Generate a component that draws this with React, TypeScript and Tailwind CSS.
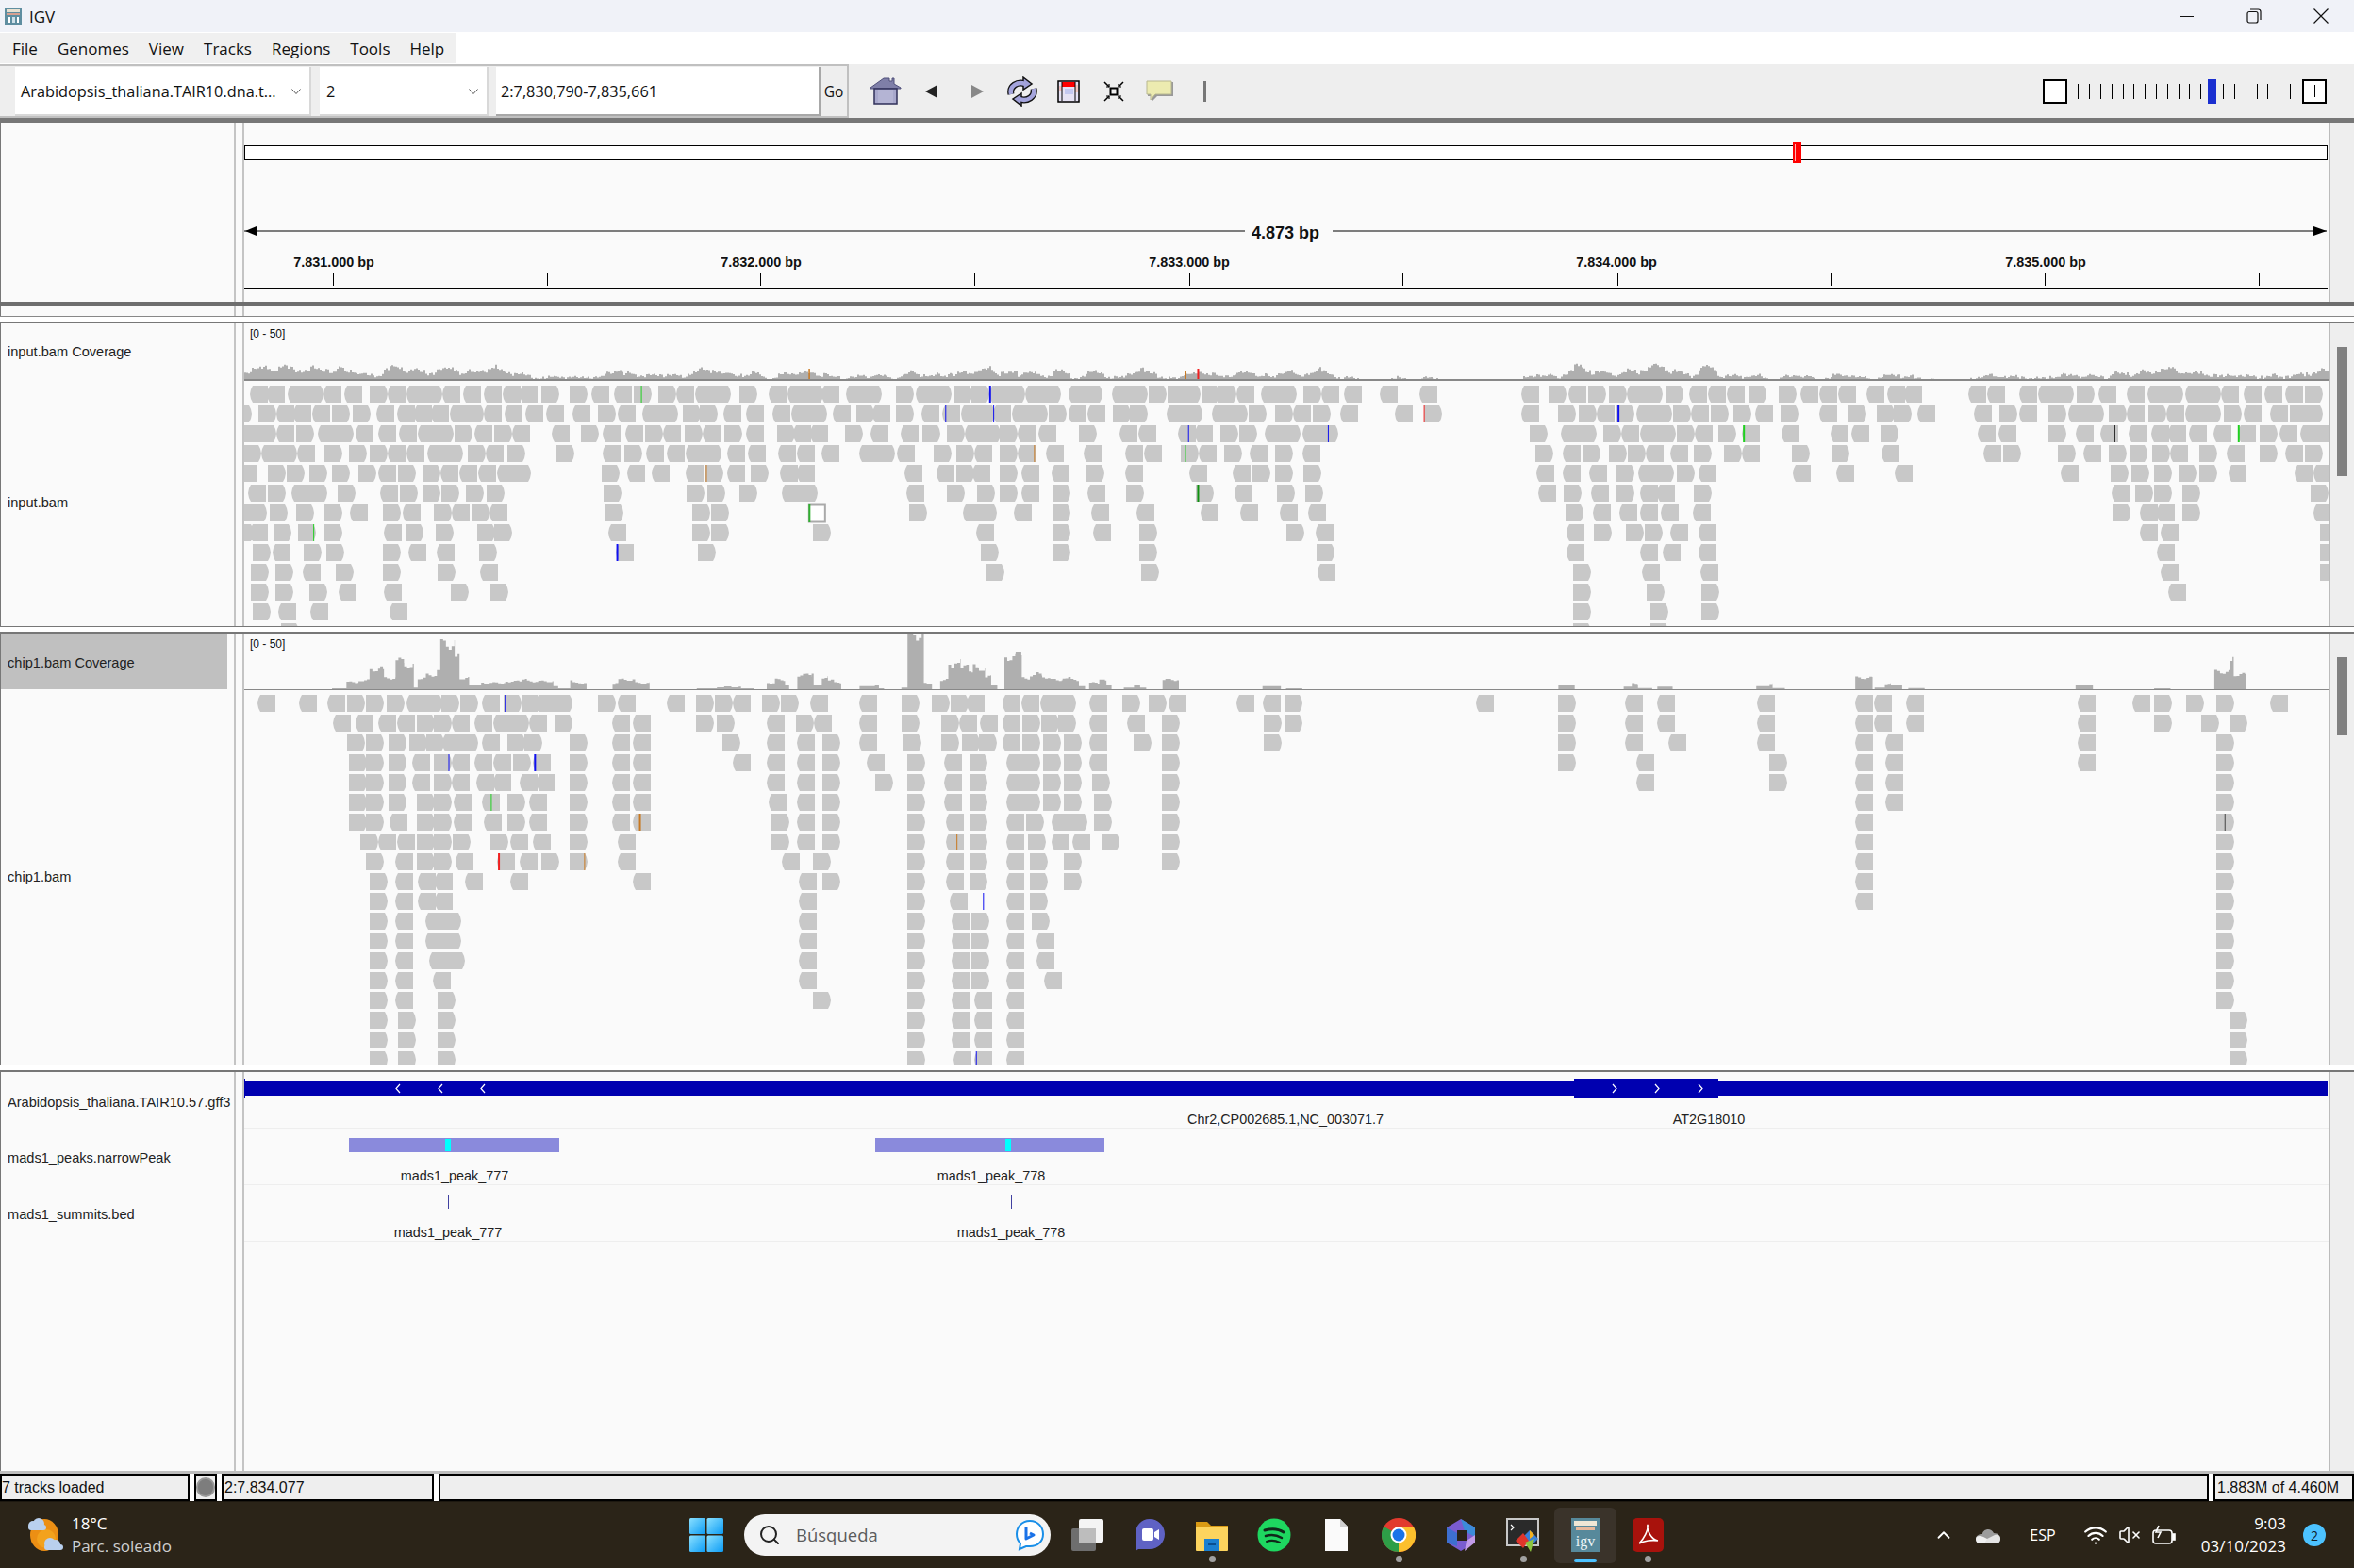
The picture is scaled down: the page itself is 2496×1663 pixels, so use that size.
import React from 'react';
import { VolumeX, Wifi, ChevronUp, Search } from 'lucide-react';

// read positions were sampled from two crops: left part (x < 800) and right part (x >= 800)
const leftX = (z: number) => z / 1.96;
const rightX = (z: number) => 800 + z * 1.0817;

type Row = [number[], number[]];
type Mark = [number, number, string, number?];

const BLUE = '#1010f0';
const GREEN = '#20d020';
const RED = '#f02020';
const ORANGE = '#c87820';

const inputRows: Row[] = [
  [[520,555,598,635,672,715,768,806,844,882,920,963,1006,1045,1080,1125,1184,1228,1275,1318,1369,1406,1445,1482,1537],
   [14,32,50,66,90,107,139,158,176,196,213,230,248,265,283,308,324,350,368,386,405,420,438,455,472,496,514,538,556,578,613,652,752,778,798,817,838,855,873,893,916,935,953,974,1004,1025,1044,1062,1090,1110,1127,1190,1208,1240,1258,1276,1296,1317,1345,1365,1383,1402,1420,1438,1460,1480,1500,1520]],
  [[486,537,575,610,648,690,733,783,825,860,895,935,968,1005,1048,1092,1135,1190,1243,1283,1335,1372,1420,1455,1503,1550],
   [18,36,54,77,100,116,139,164,184,202,218,234,252,270,288,308,326,351,368,404,422,448,466,484,510,528,547,574,628,656,752,788,808,826,845,864,882,900,918,937,960,981,1006,1044,1072,1100,1117,1140,1195,1220,1240,1268,1288,1305,1328,1345,1366,1384,1402,1420,1440,1460,1486,1505,1520]],
  [[500,537,575,615,660,698,738,786,830,868,905,945,986,1027,1065,1146,1207,1253,1300,1340,1378,1422,1460,1505,1550],
   [22,38,55,89,114,143,165,189,206,224,240,258,278,318,358,376,415,432,457,475,500,518,537,555,760,790,808,832,850,868,886,904,922,945,968,1007,1055,1075,1104,1199,1219,1268,1295,1319,1347,1369,1386,1406,1430,1454,1475,1495,1515,1530]],
  [[505,543,580,618,675,725,768,806,845,888,925,972,1010,1055,1156,1253,1298,1342,1385,1425,1463,1512,1555],
   [23,42,66,103,120,140,176,198,215,240,258,286,323,363,382,418,435,460,485,510,537,765,792,812,838,856,874,898,921,950,968,1017,1056,1105,1205,1224,1278,1303,1328,1348,1370,1388,1416,1443,1475,1500,1520]],
  [[495,557,595,643,690,745,785,828,878,915,955,993,1033,1067,1250,1303,1355,1425,1467,1512,1560],
   [25,42,147,178,198,214,240,262,291,325,363,426,469,488,510,538,766,792,818,845,866,884,904,925,1018,1060,1118,1280,1329,1350,1372,1396,1416,1445,1510,1528]],
  [[515,557,605,643,702,790,832,878,917,968,1012,1255,1427,1470,1537],
   [27,44,149,189,218,240,262,292,326,364,433,471,512,540,768,793,820,845,868,885,921,1330,1353,1372,1400,1525]],
  [[490,517,560,615,675,727,796,836,902,938,980,1018,1258,1438,1477],
   [152,204,220,254,292,330,374,437,476,515,543,795,822,848,868,888,920,1331,1358,1375,1400,1528]],
  [[490,520,568,620,675,798,843,905,992,1028,1265,1438,1478],
   [57,217,292,332,377,521,550,796,823,854,873,898,925,1358,1378,1535]],
  [[525,566,632,678,796,848,907,995,1280,1450], [222,292,377,551,796,868,890,925,1375,1535]],
  [[522,572,630,698,796,910,998], [227,379,552,802,870,927,1378,1535]],
  [[522,573,643,703,798,937,1020], [802,875,928,1386]],
  [[525,578,645,810], [802,878,928]],
  [[585], [802,878]],
];

const chipRows: Row[] = [
  [[535,621,680,721,760,804,845,882,918,957,1002,1047,1085,1115,1152,1243,1284,1385,1447,1485,1522],
   [7,26,55,103,144,174,192,208,243,262,280,298,328,361,386,406,472,498,520,707,788,853,885,983,1079,1097,1129,1297,1351,1372,1403,1433,1486]],
  [[692,738,786,825,866,902,938,985,1025,1063,1100,1152,1273,1315,1447,1490],
   [12,41,58,103,144,183,201,221,243,263,281,298,328,365,399,499,520,788,853,885,983,1079,1097,1129,1297,1372,1418,1446]],
  [[721,760,808,850,885,920,957,1002,1055,1090,1184,1273,1315,1502],
   [12,42,67,103,146,183,203,220,243,263,283,303,328,372,399,499,788,853,896,983,1079,1108,1297,1433]],
  [[725,760,808,856,902,938,985,1025,1067,1107,1184,1273,1315,1522],
   [12,42,67,110,150,186,211,247,263,283,303,328,399,788,864,995,1079,1108,1297,1433]],
  [[725,760,808,856,902,938,990,1025,1079,1115,1184,1273,1315],
   [12,42,67,118,150,186,211,247,263,283,303,331,399,864,995,1079,1108,1433]],
  [[725,760,808,866,902,943,1002,1055,1100,1184,1273,1315],
   [14,42,67,150,186,211,247,263,283,303,333,399,1079,1108,1433]],
  [[725,760,810,866,902,943,1005,1055,1100,1184,1273,1315],
   [17,42,67,150,188,211,247,266,291,309,333,399,1079,1433]],
  [[749,786,825,866,902,940,1019,1060,1108,1184,1284],
   [17,42,67,150,188,211,247,268,291,312,340,399,1079,1433]],
  [[760,821,866,902,947,1033,1079,1125,1184,1284], [27,57,150,188,211,247,270,303,399,1079,1433]],
  [[768,821,868,903,966,1060,1315], [43,67,150,188,211,247,270,303,1079,1433]],
  [[768,821,868,903], [43,150,191,247,270,1079,1433]],
  [[768,821,884,921], [43,150,193,213,247,272,1433]],
  [[768,821,884,921], [43,150,193,213,247,276,1433]],
  [[768,821,892,929], [43,150,193,213,247,276,1433]],
  [[768,821,900], [43,150,193,213,247,284,1433]],
  [[768,821,909], [57,150,193,215,247,1433]],
  [[768,827,909], [150,193,215,247,1446]],
  [[768,827,909], [150,193,215,247,1446]],
  [[768,827,909], [150,195,215,247,1446]],
];

const inputMarks: Mark[] = [
  [0, leftX(1332), GREEN], [4, leftX(1467), ORANGE], [7, leftX(651), GREEN], [8, leftX(1281), BLUE, 2],
  [0, rightX(230), BLUE, 2], [1, rightX(187), BLUE], [1, rightX(234), BLUE], [1, rightX(656), RED], [1, rightX(846), BLUE, 2],
  [2, rightX(425), BLUE], [2, rightX(562), BLUE], [2, rightX(969), GREEN, 2], [2, rightX(1333), '#222222'], [2, rightX(1454), GREEN, 2],
  [3, rightX(274), ORANGE], [3, rightX(422), GREEN], [5, rightX(434), '#109010', 2],
];

const chipMarks: Mark[] = [
  [0, leftX(1049), BLUE], [3, leftX(932), BLUE], [3, leftX(1110), BLUE, 2], [5, leftX(1020), GREEN],
  [6, leftX(1328), ORANGE, 2], [8, leftX(1035), RED, 2], [8, leftX(1214), ORANGE],
  [7, rightX(198), ORANGE], [10, rightX(224), BLUE], [18, rightX(217), BLUE], [6, rightX(1441), '#444444'],
];

// [start, end, height] in crop units, height in 3x px
const chipCoverageLeft = [
  [690,720,3],[720,745,22],[745,768,28],[768,790,63],[790,798,70],[798,822,35],[822,840,90],[840,860,75],[860,868,5],[868,885,35],[885,908,45],[908,915,55],[915,945,143],[945,955,100],[955,975,35],[975,1000,15],[1000,1050,20],[1050,1085,25],[1085,1095,35],[1095,1150,25],[1150,1160,10],[1160,1185,3],[1185,1190,30],[1190,1219,20],[1273,1285,20],[1285,1316,30],[1316,1320,35],[1320,1350,20],[1448,1490,3],[1490,1505,6],[1505,1520,9],[1520,1535,6],[1535,1540,8],[1540,1568,3],
];
const chipCoverageRight = [
  [12,20,20],[20,30,30],[30,34,12],[42,56,45],[56,58,55],[58,66,12],[66,72,38],[72,78,28],[78,85,20],[103,118,10],[118,122,15],[122,127,3],[144,150,5],[150,166,175],[166,174,20],[182,190,30],[190,196,75],[196,202,92],[202,210,70],[210,214,60],[214,220,75],[220,226,65],[226,232,40],[232,238,12],[245,250,92],[250,256,100],[256,262,108],[262,270,35],[270,276,40],[276,282,48],[282,290,38],[290,302,30],[302,310,38],[310,318,30],[318,324,10],[328,338,20],[338,345,28],[345,350,12],[362,372,5],[372,378,12],[378,384,5],[400,416,30],[498,516,10],[521,537,3],[788,804,13],[852,860,8],[860,866,18],[866,880,4],[885,900,8],[982,995,10],[995,998,18],[998,1010,4],[1079,1096,36],[1098,1108,5],[1108,1114,18],[1114,1125,12],[1131,1147,4],[1295,1312,13],[1372,1388,3],[1431,1446,55],[1446,1450,100],[1450,1462,46],
];

const READ_W = 19;
const READ_H = 18;
const NOTCH = 3;

const rowStarts = (row: Row) => [...row[0].map(leftX), ...row[1].map(rightX)];

function readsPath(rows: Row[], top: number) {
  let d = '';
  rows.forEach((row, i) => {
    const y = top + i * 21;
    rowStarts(row).forEach((x) => {
      const px = Math.round(x);
      const end = px + READ_W;
      const mid = y + READ_H / 2;
      const bottom = y + READ_H;
      if (px % 2 === 0) {
        d += `M${px} ${y}H${end - NOTCH}L${end - 1} ${y + 4}L${end} ${mid}L${end - 1} ${bottom - 4}L${end - NOTCH} ${bottom}H${px}Z`;
      } else {
        d += `M${px + NOTCH} ${y}H${end}V${bottom}H${px + NOTCH}L${px + 1} ${bottom - 4}L${px} ${mid}L${px + 1} ${y + 4}Z`;
      }
    });
  });
  return d;
}

function inputCoveragePath(base: number) {
  const all = inputRows.flatMap(rowStarts);
  let d = `M259 ${base}`;
  for (let x = 259; x < 2468; x += 2) {
    const count = all.filter((s) => s <= x && x < s + READ_W).length;
    const noise = Math.sin(x * 0.9) * 0.9 + Math.sin(x * 0.23) * 1.1;
    const h = count === 0 ? 0 : Math.max(1, count * 1.2 + noise);
    d += `V${base - h}H${x + 2}`;
  }
  return d + `V${base}Z`;
}

// splits a coverage step into narrow columns so the profile looks jagged like the real track
function chipCoveragePath(steps: number[][], toX: (z: number) => number, base: number) {
  let d = '';
  steps.forEach(([a, b, h]) => {
    const x0 = toX(a);
    const x1 = toX(b);
    for (let x = x0; x < x1; x += 3) {
      const w = Math.min(3, x1 - x);
      const t = h > 15 ? h / 3 + Math.sin(x * 1.7) * (h / 3) * 0.12 : h / 3;
      d += `M${x} ${base}V${base - t}H${x + w}V${base}Z`;
    }
  });
  return d;
}

const Reads = ({ rows, top, marks }: { rows: Row[]; top: number; marks: Mark[] }) => (
  <>
    <path d={readsPath(rows, top)} fill="#c8c8c8" />
    {marks.map(([row, x, color, w], i) => (
      <rect key={i} x={x} y={top + row * 21} width={w ?? 1} height={READ_H} fill={color} />
    ))}
  </>
);

const TitleBar = () => (
  <div className="h-[34px] flex items-center bg-[#f0f2f8] shrink-0">
    <svg width="18" height="18" viewBox="0 0 18 18" className="ml-[5px]">
      <rect width="18" height="18" fill="#5f8ea0" />
      <rect x="2" y="2" width="14" height="3" fill="#e8e0d0" />
      <rect x="2" y="6" width="14" height="2" fill="#d8a090" />
      <rect x="3" y="10" width="3" height="6" fill="#ffffff" />
      <rect x="8" y="10" width="3" height="6" fill="#d0e0e8" />
      <rect x="13" y="10" width="2" height="6" fill="#ffffff" />
    </svg>
    <span className="ml-[8px] pt-[1px] text-[17px] text-[#111] font-['Open_Sans',sans-serif]">IGV</span>
    <div className="ml-auto flex h-full">
      <div className="w-[71px] flex items-center justify-center">
        <div className="w-[15px] h-[1px] bg-[#111]" />
      </div>
      <div className="w-[71px] flex items-center justify-center">
        <svg width="16" height="16" viewBox="0 0 16 16" fill="none" stroke="#111" strokeWidth="1.2">
          <rect x="1" y="3.5" width="11" height="11.5" rx="2" />
          <path d="M4 1h8.5A2.5 2.5 0 0 1 15 3.5V12" />
        </svg>
      </div>
      <div className="w-[71px] flex items-center justify-center">
        <svg width="16" height="16" viewBox="0 0 16 16" stroke="#111" strokeWidth="1.2">
          <path d="M0.5 0.5L15.5 15.5M15.5 0.5L0.5 15.5" />
        </svg>
      </div>
    </div>
  </div>
);

const MenuBar = () => (
  <div className="h-[34px] bg-white shrink-0">
    <div className="w-[484px] h-[32px] mt-[1px] pt-[2px] bg-[#f0f0f0] flex items-center pl-[13px] gap-[21px] text-[17px] text-[#111] font-['Open_Sans',sans-serif]">
      {['File', 'Genomes', 'View', 'Tracks', 'Regions', 'Tools', 'Help'].map((m) => (
        <span key={m}>{m}</span>
      ))}
    </div>
  </div>
);

const Chevron = () => (
  <svg width="10" height="6" viewBox="0 0 10 6" fill="none" stroke="#555" strokeWidth="1">
    <path d="M0.5 0.5L5 5.5L9.5 0.5" />
  </svg>
);

const HomeIcon = () => (
  <svg width="34" height="30" viewBox="0 0 34 30">
    <path d="M1 11L15 1H21V4H24V1H26V7L33 11V12H1Z" fill="#7f7fa8" stroke="#50507a" strokeWidth="1" />
    <rect x="5" y="12" width="24" height="16" fill="#a8a8cc" stroke="#30305a" strokeWidth="1.5" />
    <rect x="9" y="13" width="16" height="14" fill="#b4b4d4" />
  </svg>
);

const RefreshIcon = () => (
  <svg width="34" height="32" viewBox="0 0 34 32" fill="none">
    <g stroke="#111" strokeWidth="7">
      <path d="M5 19C3 10 12 5 20 8" />
      <path d="M29 13C31 22 22 27 14 24" />
    </g>
    <path d="M18 1L27 8L18 14Z" fill="#a0a0d8" stroke="#111" strokeWidth="1.5" />
    <path d="M16 18L7 24L16 31Z" fill="#a0a0d8" stroke="#111" strokeWidth="1.5" />
    <g stroke="#a4a4dc" strokeWidth="4.5">
      <path d="M5 19C3 10 12 5 20 8" />
      <path d="M29 13C31 22 22 27 14 24" />
    </g>
  </svg>
);

const RegionIcon = () => (
  <svg width="24" height="24" viewBox="0 0 24 24">
    <rect x="1" y="1" width="22" height="22" fill="#e6e2f4" stroke="#000" strokeWidth="1.5" />
    <rect x="5" y="2" width="14" height="5" fill="#ff0000" />
    <rect x="8" y="9" width="9" height="6" fill="#c4c8f0" />
    <rect x="2" y="6" width="3" height="5" fill="#f0c0c0" />
    <rect x="19" y="5" width="3" height="8" fill="#f0c8c0" />
    <path d="M5 2V22M19 2V22" stroke="#000" strokeWidth="1" />
  </svg>
);

const FitIcon = () => (
  <svg width="22" height="22" viewBox="0 0 22 22" fill="none" stroke="#000">
    <rect x="7.5" y="7.5" width="7" height="7" strokeWidth="2" />
    <path d="M1 1L6 6M21 1L16 6M1 21L6 16M21 21L16 16" strokeWidth="1.5" />
    <path d="M3 6H6V3M19 6H16V3M3 16H6V19M19 16H16V19" strokeWidth="1.2" />
  </svg>
);

const CommentIcon = () => (
  <svg width="30" height="24" viewBox="0 0 30 24">
    <path d="M2 2H29V17H12L6 23V17H2Z" fill="#999" />
    <path d="M1 1H27V15H10L5 21V15H1Z" fill="#ecebb0" stroke="#b8b890" strokeWidth="1" />
  </svg>
);

const Toolbar = () => (
  <div className="h-[57px] bg-[#eeeeee] flex shrink-0 text-[16.3px] text-[#111] font-['Open_Sans',sans-serif]">
    <div className="w-[900px] border-y-2 border-r-2 border-[#c0c0c0] flex items-stretch pl-[16px] pt-[1px]">
      <div className="w-[314px] bg-white border-r-2 border-b-2 border-[#d8d8d8] flex items-center justify-between pl-[6px] pr-[9px] pt-[2px]">
        <span>Arabidopsis_thaliana.TAIR10.dna.t...</span>
        <Chevron />
      </div>
      <div className="w-[179px] ml-[9px] bg-white border-r-2 border-b-2 border-[#d8d8d8] flex items-center justify-between pl-[7px] pr-[9px] pt-[2px]">
        <span>2</span>
        <Chevron />
      </div>
      <div className="w-[344px] ml-[8px] bg-white border-r-2 border-b-2 border-[#a8a8a8] flex items-center pl-[5px] pt-[2px]">
        2:7,830,790-7,835,661
      </div>
      <div className="flex-1 flex items-center justify-center pt-[2px] text-[15.5px]">Go</div>
    </div>
    <div className="ml-[15px] pt-[1px] flex items-center">
      <div className="w-[48.4px] flex justify-center"><HomeIcon /></div>
      <div className="w-[48.4px] flex justify-center">
        <svg width="14" height="14" viewBox="0 0 14 14"><path d="M0 7L13 0V14Z" fill="#222" /></svg>
      </div>
      <div className="w-[48.4px] flex justify-center">
        <svg width="14" height="14" viewBox="0 0 14 14"><path d="M14 7L1 0V14Z" fill="#888" /></svg>
      </div>
      <div className="w-[48.4px] flex justify-center"><RefreshIcon /></div>
      <div className="w-[48.4px] flex justify-center"><RegionIcon /></div>
      <div className="w-[48.4px] flex justify-center"><FitIcon /></div>
      <div className="w-[48.4px] flex justify-center"><CommentIcon /></div>
      <div className="w-[48.4px] flex justify-center"><div className="w-[3px] h-[22px] bg-[#777]" /></div>
    </div>
    <div className="ml-auto mr-[29px] flex items-center">
      <div className="w-[26px] h-[26px] border-2 border-black bg-white flex items-center justify-center text-black">
        <div className="w-[14px] h-[1px] bg-black" />
      </div>
      <div className="ml-[11px] flex items-center gap-[10.8px]">
        {Array.from({ length: 12 }).map((_, i) => (
          <div key={i} className="w-px h-[16px] bg-black" />
        ))}
      </div>
      <div className="ml-[7px] w-[9px] h-[26px] bg-[#1a2fd0]" />
      <div className="ml-[7px] flex items-center gap-[10.8px]">
        {Array.from({ length: 7 }).map((_, i) => (
          <div key={i} className="w-px h-[16px] bg-black" />
        ))}
      </div>
      <div className="ml-[12px] w-[26px] h-[26px] border-2 border-black bg-white relative flex items-center justify-center">
        <div className="w-[13px] h-[1px] bg-black" />
        <div className="absolute w-[1px] h-[13px] bg-black" />
      </div>
    </div>
  </div>
);

const NameColumn = ({ children }: { children?: React.ReactNode }) => (
  <div className="w-[259px] shrink-0 flex h-full border-l border-[#777] bg-[#fafafa]">
    <div className="w-[249px] flex flex-col border-r-2 border-[#c4c4c4]">{children}</div>
    <div className="w-[9px] border-r-2 border-[#c4c4c4]" />
  </div>
);

const Scroll = ({ thumbTop, thumbH }: { thumbTop?: string; thumbH?: string }) => (
  <div className="flex-1 bg-[#eeeeee] border-l-2 border-[#bbbbbb] flex flex-col items-center">
    {thumbTop && <div className={thumbTop} />}
    {thumbH && <div className={thumbH} />}
  </div>
);

const TrackName = ({ label, className }: { label: string; className?: string }) => (
  <div className={`flex items-center pl-[7px] text-[14.6px] leading-none text-[#222] whitespace-nowrap ${className ?? ''}`}>
    {label}
  </div>
);

const RulerPanel = () => {
  const ticks = [353, 580, 806, 1033, 1261, 1487, 1715, 1941, 2168, 2395];
  const labels: [number, string][] = [
    [354, '7.831.000 bp'],
    [807, '7.832.000 bp'],
    [1261, '7.833.000 bp'],
    [1714, '7.834.000 bp'],
    [2169, '7.835.000 bp'],
  ];
  return (
    <div className="h-[190px] flex shrink-0">
      <NameColumn />
      <svg width="2210" height="190" viewBox="259 130 2210 190" className="bg-[#fafafa] shrink-0">
        <rect x="259.5" y="154.5" width="2208" height="15" fill="#fff" stroke="#000" />
        <rect x="1901.5" y="151.5" width="8" height="21" fill="#f00" stroke="#f00" />
        <rect x="1903" y="153" width="1" height="18" fill="#ffb0b0" />
        <path d="M259 245H2467" stroke="#000" strokeWidth="1" />
        <path d="M260 245L272 240V250Z" fill="#000" />
        <path d="M2467 245L2453 240V250Z" fill="#000" />
        <rect x="1320" y="235" width="93" height="20" fill="#fafafa" />
        <text x="1363" y="253" textAnchor="middle" fontSize="18" fontWeight="700" fill="#111">4.873 bp</text>
        {labels.map(([x, t]) => (
          <text key={t} x={x} y="283" textAnchor="middle" fontSize="14.4" fontWeight="700" fill="#111">{t}</text>
        ))}
        {ticks.map((x) => (
          <rect key={x} x={x} y="290" width="1" height="13" fill="#000" />
        ))}
        <rect x="259" y="305" width="2209" height="1" fill="#000" />
      </svg>
      <Scroll />
    </div>
  );
};

const InputPanel = () => (
  <div className="h-[321px] flex shrink-0">
    <NameColumn>
      <TrackName label="input.bam Coverage" className="h-[60px]" />
      <TrackName label="input.bam" className="flex-1" />
    </NameColumn>
    <svg width="2210" height="321" viewBox="259 343 2210 321" className="bg-[#fafafa] shrink-0">
      <text x="265" y="358" fontSize="12" fill="#111">[0 - 50]</text>
      <path d={inputCoveragePath(403)} fill="#afafaf" />
      <rect x={rightX(53)} y="391" width="1.5" height="12" fill={ORANGE} />
      <rect x={rightX(422)} y="393" width="1.5" height="10" fill={ORANGE} />
      <rect x={rightX(434)} y="391" width="2" height="12" fill={RED} />
      <rect x="259" y="402" width="2210" height="2" fill="#888" />
      <Reads rows={inputRows} top={409} marks={inputMarks} />
      <rect x={rightX(53) + 0.5} y="535.5" width="17" height="18" fill="#fff" stroke="#aaa" strokeWidth="2" />
      <rect x={rightX(53)} y="535" width="2" height="19" fill="#30b030" />
    </svg>
    <Scroll thumbTop="h-[25px]" thumbH="w-[11px] h-[137px] bg-[#808080]" />
  </div>
);

const ChipPanel = () => {
  const base = 731;
  return (
    <div className="h-[457px] flex shrink-0">
      <NameColumn>
        <TrackName label="chip1.bam Coverage" className="h-[59px] w-[240px] bg-[#c0c0c0] pt-[3px]" />
        <TrackName label="chip1.bam" className="flex-1" />
      </NameColumn>
      <svg width="2210" height="457" viewBox="259 672 2210 457" className="bg-[#fafafa] shrink-0">
        <text x="265" y="687" fontSize="12" fill="#111">[0 - 50]</text>
        <path d={chipCoveragePath(chipCoverageLeft, leftX, base)} fill="#afafaf" />
        <path d={chipCoveragePath(chipCoverageRight, rightX, base)} fill="#afafaf" />
        <rect x="259" y="731" width="2210" height="1" fill="#888" />
        <Reads rows={chipRows} top={737} marks={chipMarks} />
      </svg>
      <Scroll thumbTop="h-[25px]" thumbH="w-[11px] h-[83px] bg-[#808080]" />
    </div>
  );
};

const ChevronMark = ({ x, right }: { x: number; right?: boolean }) => (
  <path
    d={right ? `M${x - 2} 1150L${x + 2} 1154.5L${x - 2} 1159` : `M${x + 2} 1150L${x - 2} 1154.5L${x + 2} 1159`}
    stroke="#fff"
    strokeWidth="1.2"
    fill="none"
  />
);

const FeaturePanel = () => (
  <div className="h-[423px] flex shrink-0">
    <NameColumn>
      <TrackName label="Arabidopsis_thaliana.TAIR10.57.gff3" className="h-[59px] pt-[5px]" />
      <TrackName label="mads1_peaks.narrowPeak" className="h-[60px] pt-[5px]" />
      <TrackName label="mads1_summits.bed" className="h-[60px] pt-[4px]" />
    </NameColumn>
    <svg width="2210" height="423" viewBox="259 1137 2210 423" className="bg-[#fafafa] shrink-0">
      <rect x="259" y="1144" width="1" height="21" fill="#0000b0" />
      <rect x="259" y="1147" width="2209" height="15" fill="#0000b0" />
      <rect x="1669" y="1144" width="153" height="21" fill="#0000b0" />
      {[422, 467, 512].map((x) => <ChevronMark key={x} x={x} />)}
      {[1712, 1757, 1803].map((x) => <ChevronMark key={x} x={x} right />)}
      <text x="1363" y="1192" textAnchor="middle" fontSize="14.4" fill="#222">Chr2,CP002685.1,NC_003071.7</text>
      <text x="1812" y="1192" textAnchor="middle" fontSize="14.4" fill="#222">AT2G18010</text>
      <rect x="259" y="1196" width="2210" height="1" fill="#eeeeee" />
      <rect x="370" y="1207" width="223" height="15" fill="#8a8adc" />
      <rect x="472" y="1208" width="6" height="13" fill="#00ffff" />
      <rect x="928" y="1207" width="243" height="15" fill="#8a8adc" />
      <rect x="1066" y="1208" width="6" height="13" fill="#00ffff" />
      <text x="482" y="1252" textAnchor="middle" fontSize="14.4" fill="#222">mads1_peak_777</text>
      <text x="1051" y="1252" textAnchor="middle" fontSize="14.4" fill="#222">mads1_peak_778</text>
      <rect x="259" y="1256" width="2210" height="1" fill="#eeeeee" />
      <rect x="475" y="1267" width="1" height="15" fill="#4040a0" />
      <rect x="1072" y="1267" width="1" height="15" fill="#4040a0" />
      <text x="475" y="1312" textAnchor="middle" fontSize="14.4" fill="#222">mads1_peak_777</text>
      <text x="1072" y="1312" textAnchor="middle" fontSize="14.4" fill="#222">mads1_peak_778</text>
      <rect x="259" y="1316" width="2210" height="1" fill="#eeeeee" />
    </svg>
    <Scroll />
  </div>
);

const StatusBar = () => (
  <div className="h-[29px] flex bg-white text-[16px] leading-none text-[#111] shrink-0">
    <div className="w-[201px] border-2 border-black bg-[#eeeeee] flex items-center">7 tracks loaded</div>
    <div className="w-[24px] ml-[5px] border-2 border-black bg-[#eeeeee] flex items-center justify-center">
      <div className="w-[20px] h-[21px] rounded-full bg-[#7d7d7d] border-2 border-[#999]" />
    </div>
    <div className="w-[225px] ml-[5px] border-2 border-black bg-[#eeeeee] flex items-center pl-[1px]">2:7.834.077</div>
    <div className="w-[1877px] ml-[5px] border-2 border-black bg-[#eeeeee]" />
    <div className="flex-1 ml-[5px] border-2 border-black bg-[#eeeeee] flex items-center pl-[2px]">1.883M of 4.460M</div>
  </div>
);

const WeatherIcon = () => (
  <svg width="40" height="40" viewBox="0 0 40 40">
    <ellipse cx="20" cy="20" rx="15" ry="17" fill="#ec8f14" />
    <ellipse cx="22" cy="24" rx="10" ry="10" fill="#f3a21c" />
    <g fill="#b9d0ee">
      <circle cx="8" cy="10" r="5" />
      <circle cx="14" cy="8" r="6" />
      <rect x="3" y="9" width="19" height="6" rx="3" />
      <circle cx="26" cy="29" r="6" />
      <circle cx="32" cy="30" r="5" />
      <rect x="20" y="30" width="20" height="6" rx="3" />
    </g>
  </svg>
);

const WindowsLogo = () => (
  <svg width="36" height="36" viewBox="0 0 36 36">
    <defs>
      <linearGradient id="win" x1="0" y1="0" x2="1" y2="1">
        <stop offset="0" stopColor="#8ae0ff" />
        <stop offset="1" stopColor="#0c9cf5" />
      </linearGradient>
    </defs>
    <rect width="17" height="17" rx="1.5" fill="url(#win)" />
    <rect x="18.5" width="17.5" height="17" rx="1.5" fill="url(#win)" />
    <rect y="18.5" width="17" height="17.5" rx="1.5" fill="url(#win)" />
    <rect x="18.5" y="18.5" width="17.5" height="17.5" rx="1.5" fill="url(#win)" />
  </svg>
);

const BingIcon = () => (
  <svg width="32" height="34" viewBox="0 0 32 34" fill="none">
    <path d="M16 2C25 2 30 9 30 16C30 24 24 29 16 29H12L5 32L6 26C3 23 2 20 2 16C2 9 7 2 16 2Z" stroke="#1a8fe8" strokeWidth="2" fill="#fff" />
    <path d="M12 8V21L20 17L16 15" stroke="#1a72e8" strokeWidth="3" strokeLinejoin="round" />
  </svg>
);

const TaskIcons: React.ReactNode[] = [
  <svg key="view" width="36" height="36" viewBox="0 0 36 36">
    <rect x="1" y="11" width="26" height="24" rx="2" fill="#6e6e6e" />
    <rect x="9" y="1" width="26" height="25" rx="2" fill="#f4f4f4" />
    <rect x="9" y="11" width="18" height="15" fill="#bdbdbd" />
  </svg>,
  <svg key="chat" width="34" height="36" viewBox="0 0 34 36">
    <path d="M17 1C26 1 33 8 33 17C33 26 26 33 17 33H5L2 35V17C2 8 8 1 17 1Z" fill="#5f62c4" />
    <rect x="9" y="11" width="12" height="13" rx="2" fill="#fff" />
    <path d="M22 15L27 12V23L22 20Z" fill="#fff" />
  </svg>,
  <svg key="folder" width="36" height="36" viewBox="0 0 36 36">
    <path d="M1 4H13L17 8H35V34H1Z" fill="#d99a14" />
    <rect x="1" y="9" width="34" height="26" rx="1" fill="#fcd45e" />
    <rect x="10" y="22" width="16" height="13" fill="#1a7fd0" />
    <rect x="14" y="27" width="8" height="2" fill="#0a4f90" />
  </svg>,
  <svg key="spotify" width="36" height="36" viewBox="0 0 36 36" fill="none">
    <circle cx="18" cy="18" r="17.5" fill="#1ed760" />
    <g stroke="#10281a" strokeLinecap="round">
      <path d="M8 13C15 11 22 11 28 15" strokeWidth="3" />
      <path d="M9 19C15 17 21 18 26 21" strokeWidth="2.5" />
      <path d="M10 25C15 23 20 24 24 26" strokeWidth="2" />
    </g>
  </svg>,
  <svg key="doc" width="26" height="34" viewBox="0 0 26 34">
    <path d="M1 0H17L25 8V34H1Z" fill="#fafafa" />
    <path d="M17 0L25 8H17Z" fill="#cfcfcf" />
  </svg>,
  <svg key="chrome" width="36" height="36" viewBox="0 0 36 36">
    <circle cx="18" cy="18" r="18" fill="#e23a2e" />
    <path d="M18 18L2.4 9A18 18 0 0 0 18 36L27 20Z" fill="#2e9e47" />
    <path d="M18 18L18 36A18 18 0 0 0 33.6 9H18Z" fill="#fbc02d" />
    <circle cx="18" cy="18" r="8.5" fill="#fff" />
    <circle cx="18" cy="18" r="6.5" fill="#1a73e8" />
  </svg>,
  <svg key="hex" width="32" height="36" viewBox="0 0 32 36">
    <path d="M16 1L31 10V26L16 35L1 26V10Z" fill="#7a5cd0" />
    <path d="M16 1L31 10V20L20 14Z" fill="#3c8bd9" />
    <path d="M1 10L12 16V30L1 26Z" fill="#3d6fd0" />
    <path d="M12 13L22 13L22 24L12 24Z" fill="#2a2318" />
    <path d="M20 35L31 26V18L22 24Z" fill="#c29be8" />
  </svg>,
  <svg key="term" width="36" height="36" viewBox="0 0 36 36">
    <rect x="1" y="1" width="33" height="28" fill="#2a2a2a" stroke="#c8c8c8" strokeWidth="2" />
    <path d="M5 7L8 10L5 13" stroke="#fff" strokeWidth="1.2" fill="none" />
    <path d="M16 22L25 13L34 22L25 31Z" fill="#3880d8" />
    <path d="M10 24L18 16L24 24L18 32Z" fill="#e0352b" />
    <path d="M20 26L30 22L26 36Z" fill="#8cc63f" />
    <path d="M25 13L30 18L25 22Z" fill="#f2b01e" />
  </svg>,
  <svg key="igv" width="30" height="36" viewBox="0 0 30 36">
    <rect width="30" height="36" fill="#57899b" />
    <rect x="3" y="3" width="24" height="5" fill="#efe7d5" />
    <rect x="5" y="10" width="20" height="3" fill="#e7b99c" />
    <text x="15" y="30" textAnchor="middle" fontSize="16" fill="#eef5f7" fontFamily="Liberation Serif">igv</text>
  </svg>,
  <svg key="pdf" width="33" height="36" viewBox="0 0 33 36" fill="none">
    <rect width="33" height="36" rx="5" fill="#a8120c" />
    <path d="M7 27C12 22 17 13 16 7C15 13 20 23 27 24C21 23 12 24 7 27Z" stroke="#fff" strokeWidth="1.6" />
  </svg>,
];

const Taskbar = () => (
  <div className="flex-1 bg-[#2b2418] flex items-center text-white font-['Open_Sans',sans-serif] border-t border-[#1d1810]">
    <div className="w-[716px] flex items-center pl-[27px]">
      <WeatherIcon />
      <div className="ml-[9px] text-[17px] leading-[24px]">
        <div>18°C</div>
        <div className="text-[#cfcfcf]">Parc. soleado</div>
      </div>
    </div>
    <div className="w-[66px] flex justify-center"><WindowsLogo /></div>
    <div className="w-[325px] h-[44px] ml-[7px] bg-[#f3f3f3] rounded-full flex items-center pl-[15px] text-[#5c5c5c] text-[18.5px]">
      <Search className="w-[24px] h-[24px] text-[#222]" strokeWidth={2} />
      <span className="ml-[16px]">Búsqueda</span>
      <div className="ml-auto mr-[6px] flex"><BingIcon /></div>
    </div>
    <div className="ml-[6px] flex items-center">
      {TaskIcons.map((icon, i) => (
        <div key={i} className={`w-[66px] h-[59px] flex items-center justify-center relative ${i === 8 ? 'bg-[#3a332a] rounded-md' : ''}`}>
          {icon}
          {(i === 2 || i === 5 || i === 7 || i === 9) && (
            <div className="absolute bottom-[1px] w-[7px] h-[7px] rounded-full bg-[#a0a0a0]" />
          )}
          {i === 8 && <div className="absolute bottom-[1px] w-[24px] h-[4px] rounded-full bg-[#4cc2ff]" />}
        </div>
      ))}
    </div>
    <div className="ml-[257px] flex items-center">
      <div className="w-[47px] flex justify-center"><ChevronUp className="w-[22px] h-[22px]" strokeWidth={2} /></div>
      <div className="w-[48px] flex justify-center">
        <svg width="26" height="18" viewBox="0 0 26 18">
          <path d="M7 8C7 3 16 0 19 7C24 7 26 10 26 13C26 16 24 18 21 18H4C1 18 0 15 0 13C0 10 3 8 7 8Z" fill="#9c9c9c" />
          <path d="M0 13C0 10 4 9 8 11L14 14L21 18H4C1 18 0 15 0 13Z" fill="#f0f0f0" />
          <path d="M12 13L20 9C24 8 26 10 26 13C26 16 24 18 21 18H9Z" fill="#e4e4e4" />
        </svg>
      </div>
      <div className="w-[68px] text-center text-[16px]">ESP</div>
      <div className="w-[44px] flex justify-center"><Wifi className="w-[26px] h-[26px]" strokeWidth={2} /></div>
      <div className="w-[28px] flex justify-center"><VolumeX className="w-[24px] h-[24px]" strokeWidth={1.6} /></div>
      <div className="w-[46px] flex justify-center">
        <svg width="26" height="22" viewBox="0 0 26 22" fill="none" stroke="#fff" strokeWidth="1.6">
          <rect x="1" y="6" width="20" height="14" rx="3" />
          <rect x="22" y="10" width="2" height="6" fill="#fff" />
          <path d="M7 1L4 8H9L6 14" strokeWidth="1.6" />
        </svg>
      </div>
      <div className="w-[106px] text-right text-[17px] leading-[24px]">
        <div>9:03</div>
        <div>03/10/2023</div>
      </div>
      <div className="ml-[18px] w-[24px] h-[24px] rounded-full bg-[#4cc2ff] text-[#10202a] text-[14px] flex items-center justify-center">2</div>
    </div>
  </div>
);

const App = () => (
  <div className="w-[2496px] h-[1663px] flex flex-col overflow-hidden bg-white font-['Liberation_Sans',sans-serif]">
    <TitleBar />
    <MenuBar />
    <Toolbar />
    <div className="h-[5px] bg-[#777] shrink-0" />
    <RulerPanel />
    <div className="h-[5px] bg-[#6e6e6e] shrink-0" />
    <div className="h-[11px] flex shrink-0 border-b border-[#888]">
      <NameColumn />
      <div className="flex-1 bg-[#fafafa]" />
    </div>
    <div className="h-[5px] shrink-0" />
    <div className="h-[2px] bg-[#777] shrink-0" />
    <InputPanel />
    <div className="h-[1px] bg-[#777] shrink-0" />
    <div className="h-[5px] shrink-0" />
    <div className="h-[2px] bg-[#777] shrink-0" />
    <ChipPanel />
    <div className="h-[1px] bg-[#777] shrink-0" />
    <div className="h-[5px] shrink-0" />
    <div className="h-[2px] bg-[#777] shrink-0" />
    <FeaturePanel />
    <div className="h-[3px] bg-[#bdbdbd] shrink-0" />
    <StatusBar />
    <Taskbar />
  </div>
);

export default App;
